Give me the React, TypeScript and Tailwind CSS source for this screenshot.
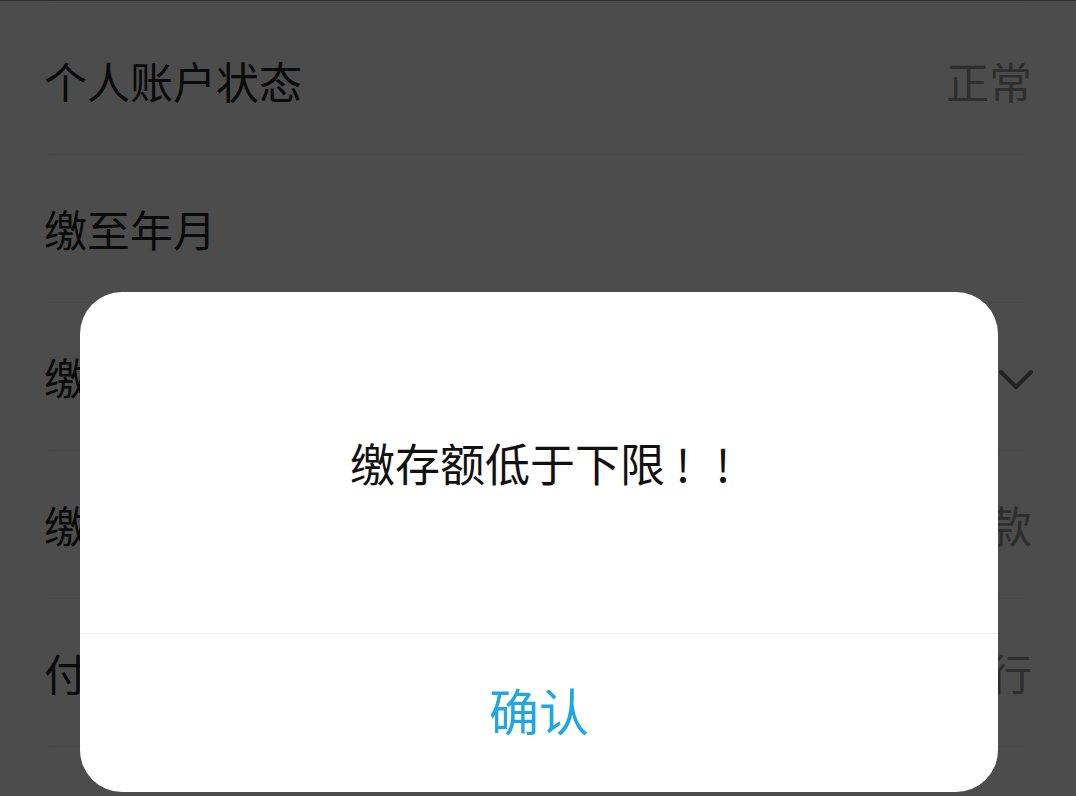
import React from "react";

const rows: { label: string; value?: string; select?: boolean }[] = [
	{ label: "个人账户状态", value: "正常" },
	{ label: "缴至年月" },
	{ label: "缴存月数", select: true },
	{ label: "缴存方式", value: "银行卡扣款" },
	{ label: "付款银行", value: "中国建设银行" },
	{ label: "" },
];

const ChevronDown = () => (
	<svg width="36" height="24" viewBox="0 0 36 24" fill="none">
		<path d="M3 4 L18 19 L33 4" stroke="#777" strokeWidth="4" strokeLinecap="round" strokeLinejoin="round" />
	</svg>
);

// exclamation mark, centred in a fixed box
const Bang = () => <span className="inline-block w-[40px] text-center">!</span>;

export default function App() {
	return (
		<div className="relative h-[796px] w-[1076px] overflow-hidden bg-white font-['Noto_Sans_CJK_SC','Noto_Sans',sans-serif]">
			<div className="h-[7px] border-b border-[#eee] mx-[50px]" />
			{rows.map((row, i) => (
				<div key={i} className="mx-[50px] flex h-[148px] items-center justify-between border-b border-[#eee]">
					<span className="-ml-[6px] text-[43px] leading-none text-[#222]">{row.label}</span>
					{row.value && <span className="-mr-[6px] text-[43px] leading-none text-[#999]">{row.value}</span>}
					{row.select && (
						<span className="-mr-[8px] pt-[6px]">
							<ChevronDown />
						</span>
					)}
				</div>
			))}

			{/* mask */}
			<div className="absolute inset-0 border-t border-black/40 bg-black/70" />

			{/* dialog */}
			<div className="absolute left-[80px] top-[292px] flex h-[500px] w-[918px] flex-col overflow-hidden rounded-[42px] bg-white">
				<div className="flex h-[342px] items-center justify-center border-b border-[#eee] pl-[15px]">
					<span className="text-[45px] leading-none text-[#111]">
						缴存额低于下限
						<span className="-ml-[2px]">
							<Bang />
							<Bang />
						</span>
					</span>
				</div>
				<button className="flex flex-1 items-center justify-center pb-[8px] text-[50px] leading-none text-[#22a6e0]">确认</button>
			</div>
		</div>
	);
}
